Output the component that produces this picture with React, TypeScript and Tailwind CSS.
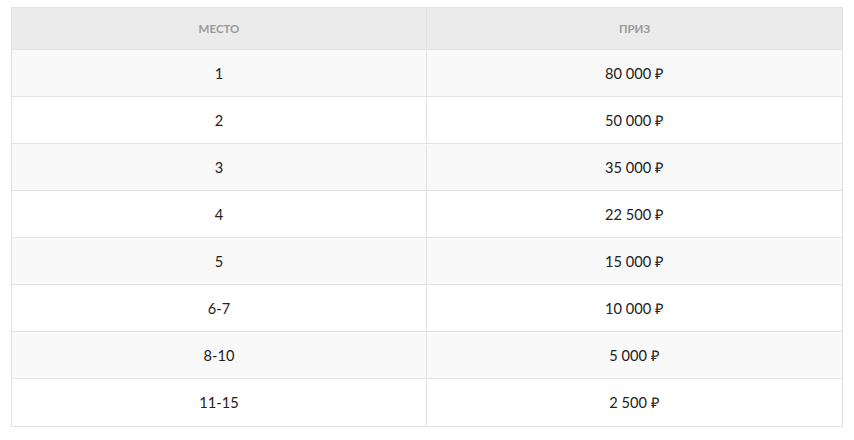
import React from "react";

const prizes = [
  { place: "1", prize: "80 000 ₽" },
  { place: "2", prize: "50 000 ₽" },
  { place: "3", prize: "35 000 ₽" },
  { place: "4", prize: "22 500 ₽" },
  { place: "5", prize: "15 000 ₽" },
  { place: "6-7", prize: "10 000 ₽" },
  { place: "8-10", prize: "5 000 ₽" },
  { place: "11-15", prize: "2 500 ₽" },
];

export default function App() {
  return (
    <div className="min-h-screen bg-white pt-[7px] pl-[11px] font-['Lato',_'Open_Sans',_sans-serif]">
      <div className="w-[832px] border border-[#e2e2e2]">
        <div className="grid grid-cols-2 h-[42px] bg-[#ebebeb] border-b border-[#e2e2e2] text-[11.5px] font-bold uppercase text-[#9a9a9a]">
          <div className="flex items-center justify-center border-r border-[#e2e2e2]">Место</div>
          <div className="flex items-center justify-center">Приз</div>
        </div>
        {prizes.map((row, i) => (
          <div
            key={row.place}
            className={`grid grid-cols-2 h-[47px] pt-[1px] text-[14.6px] text-[#222] ${
              i < prizes.length - 1 ? "border-b border-[#e2e2e2]" : ""
            } ${i % 2 === 0 ? "bg-[#f9f9f9]" : "bg-white"}`}
          >
            <div className="flex items-center justify-center border-r border-[#e2e2e2]">{row.place}</div>
            <div className="flex items-center justify-center">{row.prize}</div>
          </div>
        ))}
      </div>
    </div>
  );
}
